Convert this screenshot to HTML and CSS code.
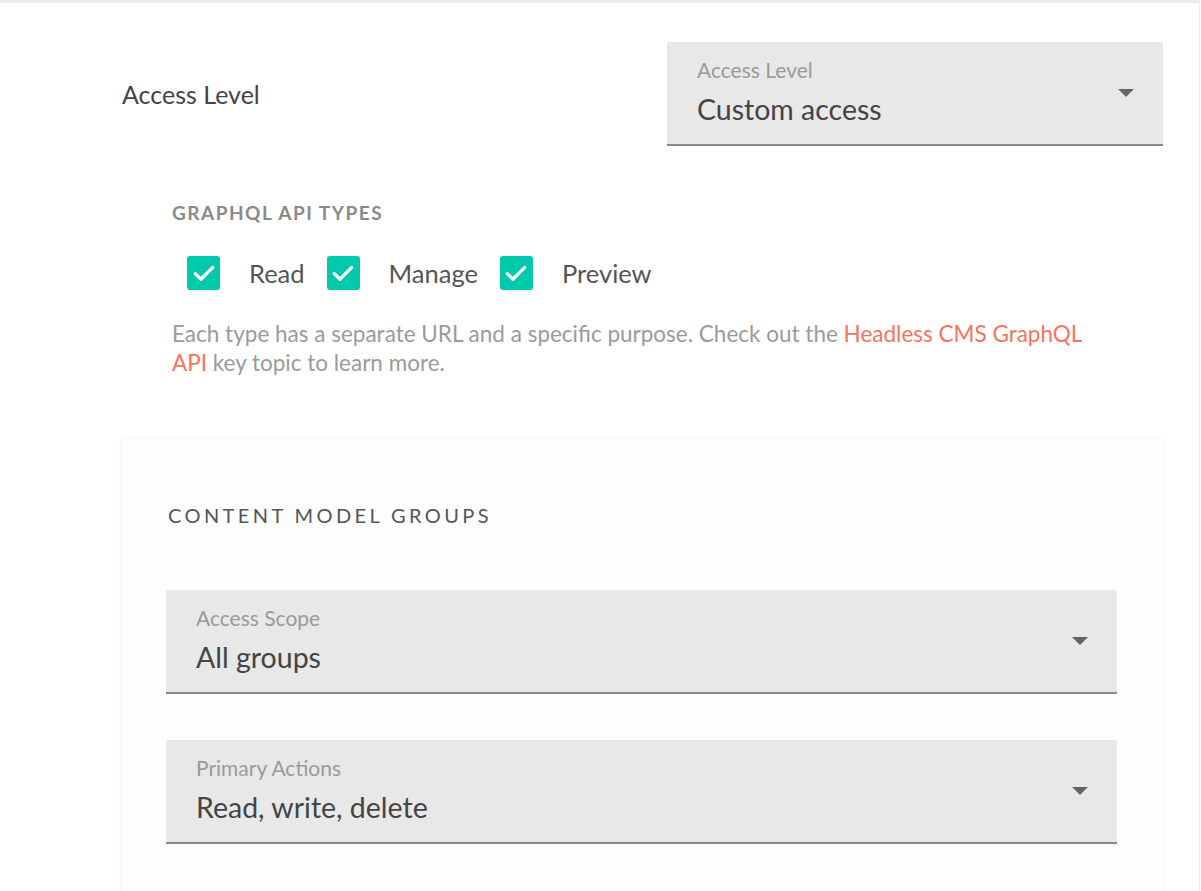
FILE: index.html
```html
<!DOCTYPE html>
<html>
<head>
<meta charset="utf-8">
<link rel="stylesheet" href="styles.css">
</head>
<body>
<div class="panel">
  <div class="content">
    <div class="level-row">
      <div class="level-label">Access Level</div>
      <div class="select select-level">
        <div class="select-text">
          <div class="select-label">Access Level</div>
          <div class="select-value">Custom access</div>
        </div>
        <span class="arrow"></span>
      </div>
    </div>

    <div class="api-types">
      <div class="section-title">GRAPHQL API TYPES</div>
      <div class="checks">
        <label class="check"><span class="box"><svg viewBox="0 0 24 24"><path d="M5 12.5l4.5 4.5L19 7.5" fill="none" stroke="#fff" stroke-width="2.6" stroke-linecap="round" stroke-linejoin="round"/></svg></span><span class="check-text">Read</span></label>
        <label class="check"><span class="box"><svg viewBox="0 0 24 24"><path d="M5 12.5l4.5 4.5L19 7.5" fill="none" stroke="#fff" stroke-width="2.6" stroke-linecap="round" stroke-linejoin="round"/></svg></span><span class="check-text">Manage</span></label>
        <label class="check"><span class="box"><svg viewBox="0 0 24 24"><path d="M5 12.5l4.5 4.5L19 7.5" fill="none" stroke="#fff" stroke-width="2.6" stroke-linecap="round" stroke-linejoin="round"/></svg></span><span class="check-text">Preview</span></label>
      </div>
      <p class="help">Each type has a separate URL and a specific purpose. Check out the <a class="link" href="#">Headless CMS GraphQL API</a> key topic to learn more.</p>
    </div>

    <div class="card">
      <div class="card-title">CONTENT MODEL GROUPS</div>
      <div class="select select-wide">
        <div class="select-text">
          <div class="select-label">Access Scope</div>
          <div class="select-value">All groups</div>
        </div>
        <span class="arrow"></span>
      </div>
      <div class="select select-wide">
        <div class="select-text">
          <div class="select-label">Primary Actions</div>
          <div class="select-value">Read, write, delete</div>
        </div>
        <span class="arrow"></span>
      </div>
    </div>
  </div>
</div>
</body>
</html>
```
FILE: styles.css
```css
html, body {
  margin: 0;
  padding: 0;
  background: #fff;
  font-family: Lato, "Liberation Sans", sans-serif;
  overflow: hidden;
}

.panel {
  width: 1199px;
  height: 888px;
  border-top: 3px solid #ececec;
  border-right: 1px solid #ececec;
  overflow: hidden;
}

.content {
  padding-left: 122px;
  width: 1041px;
}

.level-row {
  display: flex;
  justify-content: space-between;
  align-items: flex-start;
  padding-top: 39px;
}

.level-label {
  font-size: 25px;
  line-height: 30px;
  color: #444;
  margin-top: 37px;
}

.select {
  box-sizing: border-box;
  height: 104px;
  background: #e8e8e8;
  border-bottom: 2px solid #8a8a8a;
  border-radius: 2px 2px 0 0;
  display: flex;
  align-items: center;
  justify-content: space-between;
  padding: 0 29px 0 30px;
}

.select-text {
  align-self: flex-start;
  padding-top: 16px;
}

.select-level {
  width: 496px;
}

.select-label {
  font-size: 21px;
  color: #9a9a9a;
  line-height: 24px;
}

.select-value {
  font-size: 28.5px;
  color: #444;
  line-height: 32px;
  margin-top: 11px;
}

.arrow {
  width: 0;
  height: 0;
  border-left: 8px solid transparent;
  border-right: 8px solid transparent;
  border-top: 8px solid #666;
}

.api-types {
  padding-left: 50px;
  padding-top: 57px;
}

.section-title {
  font-size: 19px;
  font-weight: 700;
  color: #8a8a8a;
  letter-spacing: 1.5px;
  line-height: 20px;
}

.checks {
  display: flex;
  align-items: center;
  margin-top: 33px;
  margin-left: 15px;
}

.check {
  display: flex;
  align-items: center;
}

.box {
  width: 33px;
  height: 34px;
  border-radius: 3px;
  background: #00c9ac;
  display: flex;
  align-items: center;
  justify-content: center;
}

.box svg {
  width: 30px;
  height: 30px;
}

.check-text {
  font-size: 25.5px;
  color: #555;
  margin-left: 29px;
  margin-right: 22px;
}

.help {
  margin: 29px 0 0;
  font-size: 22.5px;
  line-height: 29px;
  color: #9a9a9a;
  width: 935px;
}

.link {
  color: #f8735e;
  text-decoration: none;
}

.card {
  margin-top: 61px;
  margin-left: -1px;
  width: 1042px;
  box-sizing: border-box;
  height: 500px;
  background: #fdfdfd;
  box-shadow: 0 0 3px rgba(0,0,0,0.08);
  padding: 66px 46px 0 45px;
}

.card-title {
  font-size: 20px;
  color: #555;
  letter-spacing: 3.4px;
  line-height: 22px;
  margin-left: 2px;
}

.select-wide {
  margin-top: 64px;
  width: 951px;
}

.select-wide + .select-wide {
  margin-top: 46px;
}
```
